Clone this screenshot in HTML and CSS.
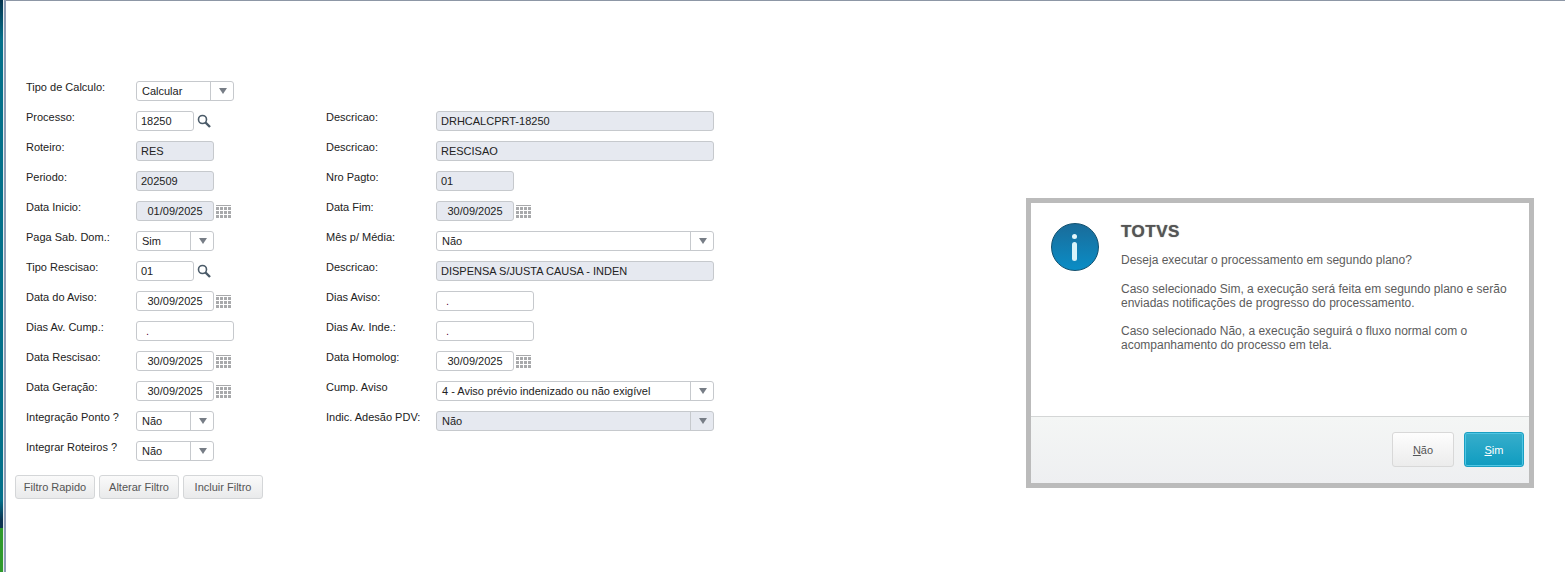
FILE: index.html
```html
<!DOCTYPE html>
<html lang="en">
<head>
  <meta charset="UTF-8">
  <title>TOTVS</title>
  <link rel="stylesheet" href="styles.css">
</head>
<body>
  <div class="frame">
    <div class="stripe"></div>
    <div class="content">
      <form class="form">
        <label>Tipo de Calculo:</label>
        <div class="cell"><div class="field select w98"><span>Calcular</span><i class="arrow"></i></div></div>
        <span></span><span></span>

        <label>Processo:</label>
        <div class="cell"><div class="field w58">18250</div><svg class="lookup" viewBox="0 0 14 14"><circle cx="5.5" cy="5.5" r="4" /><path d="M8.5 8.5L13 13" /></svg></div>
        <label>Descricao:</label>
        <div class="cell"><div class="field off w278">DRHCALCPRT-18250</div></div>

        <label>Roteiro:</label>
        <div class="cell"><div class="field off w78">RES</div></div>
        <label>Descricao:</label>
        <div class="cell"><div class="field off w278">RESCISAO</div></div>

        <label>Periodo:</label>
        <div class="cell"><div class="field off w78">202509</div></div>
        <label>Nro Pagto:</label>
        <div class="cell"><div class="field off w78">01</div></div>

        <label>Data Inicio:</label>
        <div class="cell"><div class="field off date w78">01/09/2025</div><i class="cal"></i></div>
        <label>Data Fim:</label>
        <div class="cell"><div class="field off date w78">30/09/2025</div><i class="cal"></i></div>

        <label>Paga Sab. Dom.:</label>
        <div class="cell"><div class="field select w78"><span>Sim</span><i class="arrow"></i></div></div>
        <label>Mês p/ Média:</label>
        <div class="cell"><div class="field select w278"><span>Não</span><i class="arrow"></i></div></div>

        <label>Tipo Rescisao:</label>
        <div class="cell"><div class="field w58">01</div><svg class="lookup" viewBox="0 0 14 14"><circle cx="5.5" cy="5.5" r="4" /><path d="M8.5 8.5L13 13" /></svg></div>
        <label>Descricao:</label>
        <div class="cell"><div class="field off w278">DISPENSA S/JUSTA CAUSA - INDEN</div></div>

        <label>Data do Aviso:</label>
        <div class="cell"><div class="field date w78">30/09/2025</div><i class="cal"></i></div>
        <label>Dias Aviso:</label>
        <div class="cell"><div class="field num w98">.</div></div>

        <label>Dias Av. Cump.:</label>
        <div class="cell"><div class="field num w98">.</div></div>
        <label>Dias Av. Inde.:</label>
        <div class="cell"><div class="field num w98">.</div></div>

        <label>Data Rescisao:</label>
        <div class="cell"><div class="field date w78">30/09/2025</div><i class="cal"></i></div>
        <label>Data Homolog:</label>
        <div class="cell"><div class="field date w78">30/09/2025</div><i class="cal"></i></div>

        <label>Data Geração:</label>
        <div class="cell"><div class="field date w78">30/09/2025</div><i class="cal"></i></div>
        <label>Cump. Aviso</label>
        <div class="cell"><div class="field select w278"><span>4 - Aviso prévio indenizado ou não exigível</span><i class="arrow"></i></div></div>

        <label>Integração Ponto ?</label>
        <div class="cell"><div class="field select w78"><span>Não</span><i class="arrow"></i></div></div>
        <label>Indic. Adesão PDV:</label>
        <div class="cell"><div class="field select off w278"><span>Não</span><i class="arrow"></i></div></div>

        <label>Integrar Roteiros ?</label>
        <div class="cell"><div class="field select w78"><span>Não</span><i class="arrow"></i></div></div>
        <span></span><span></span>
      </form>
      <div class="actions">
        <button type="button" class="btn">Filtro Rapido</button>
        <button type="button" class="btn">Alterar Filtro</button>
        <button type="button" class="btn">Incluir Filtro</button>
      </div>
    </div>
  </div>

  <div class="modal">
    <div class="modal-body">
      <div class="info-icon"><i class="info-dot"></i><i class="info-bar"></i></div>
      <div class="modal-text">
        <h3>TOTVS</h3>
        <p class="lead">Deseja executar o processamento em segundo plano?</p>
        <p>Caso selecionado Sim, a execução será feita em segundo plano e serão<br>enviadas notificações de progresso do processamento.</p>
        <p>Caso selecionado Não, a execução seguirá o fluxo normal com o<br>acompanhamento do processo em tela.</p>
      </div>
    </div>
    <div class="modal-foot">
      <button type="button" class="mbtn"><u>N</u>ão</button>
      <button type="button" class="mbtn primary"><u>S</u>im</button>
    </div>
  </div>
</body>
</html>
```

FILE: styles.css
```css
html, body {
  margin: 0;
  height: 100%;
}
body {
  font-family: "Liberation Sans", Arial, sans-serif;
  font-size: 11px;
  color: #222;
  background: #fff;
  overflow: hidden;
}
.frame {
  display: flex;
  height: 572px;
}
.stripe {
  width: 6px;
  flex: none;
  background:
    linear-gradient(to right, transparent 3px, #e8ecf0 3px, #e8ecf0 4px, #8c9cb4 4px),
    linear-gradient(to bottom, #07354f, #04708a 40px, #04708a 500px, #0c3450 520px, #0c3450 528px, #2f9a2c 528px);
}
.content {
  flex: 1;
  border-top: 1px solid #8d97a6;
  padding: 80px 0 0 9px;
}
.form {
  display: grid;
  grid-template-columns: 110px 190px 110px 278px;
  grid-auto-rows: 30px;
  padding-left: 11px;
}
.form label {
  line-height: 13px;
}
.cell {
  display: flex;
  align-items: flex-start;
}
.field {
  box-sizing: border-box;
  height: 20px;
  line-height: 19px;
  border: 1px solid #c6c9cd;
  border-radius: 3px;
  padding: 0 4px;
  background: #fff;
  white-space: nowrap;
}
.off {
  background: #e6e9f0;
}
.date {
  text-align: center;
}
.num {
  padding-left: 9px;
  color: #600040;
}
.select {
  display: flex;
  justify-content: space-between;
  padding: 0 0 0 5px;
}
.arrow {
  position: relative;
  width: 22px;
  flex: none;
  border-left: 1px solid #c6c9cd;
}
.arrow::after {
  content: "";
  position: absolute;
  left: 8px;
  top: 6px;
  border-style: solid;
  border-width: 6px 4px 0;
  border-color: #777d86 transparent transparent;
}
.w58 { width: 58px; }
.w78 { width: 78px; }
.w98 { width: 98px; }
.w278 { width: 278px; }
.lookup {
  width: 14px;
  height: 14px;
  margin: 3px 0 0 3px;
  fill: none;
  stroke: #4a5a68;
  stroke-width: 1.6;
}
.lookup path {
  stroke-width: 2.4;
}
.cal {
  width: 15px;
  height: 13px;
  margin: 4px 0 0 2px;
  background-color: #a8a9ab;
  background-image:
    linear-gradient(#a8a9ab, #a8a9ab),
    linear-gradient(to right, transparent 3px, #fff 3px),
    linear-gradient(to bottom, #fff 1px, transparent 1px);
  background-repeat: no-repeat, repeat, repeat;
  background-size: 100% 1px, 4px 4px, 4px 4px;
  background-position: 0 0, 0 1px, 0 1px;
}
.actions {
  display: flex;
  gap: 4px;
  margin-top: 4px;
}
.btn {
  box-sizing: border-box;
  height: 24px;
  width: 80px;
  padding: 0;
  border: 1px solid #d4d6d8;
  border-radius: 3px;
  background: linear-gradient(#fafafa, #e9eaeb);
  font: 11px "Liberation Sans", Arial, sans-serif;
  color: #555;
}
.modal {
  position: absolute;
  left: 1026px;
  top: 198px;
  box-sizing: border-box;
  width: 508px;
  height: 290px;
  border: 5px solid #bbb;
  display: flex;
  flex-direction: column;
  background: #fff;
}
.modal-body {
  flex: 1;
  display: flex;
}
.info-icon {
  position: relative;
  box-sizing: border-box;
  flex: none;
  width: 48px;
  height: 48px;
  margin: 20px 0 0 20px;
  border-radius: 50%;
  border: 1px solid #11506f;
  background: linear-gradient(#1a6c9a, #0a8dc6);
}
.info-dot {
  position: absolute;
  left: 20px;
  top: 10px;
  width: 5px;
  height: 5px;
  border-radius: 50%;
  background: #e4f6fb;
}
.info-bar {
  position: absolute;
  left: 20px;
  top: 18px;
  width: 5px;
  height: 19px;
  border-radius: 3px;
  background: #d8f3fa;
}
.modal-text {
  margin-left: 22px;
  padding-top: 19px;
  color: #5c5c5c;
  font-size: 12px;
  line-height: 14px;
}
.modal-text h3 {
  margin: 0 0 12px;
  font-size: 17px;
  line-height: 19px;
  letter-spacing: 0.5px;
  color: #555;
  text-shadow: 0 0 1px #777;
}
.modal-text p {
  margin: 0 0 14px;
}
.modal-text .lead {
  margin-bottom: 15px;
}
.modal-foot {
  height: 67px;
  flex: none;
  box-sizing: border-box;
  border-top: 1px solid #d4d6d6;
  background: linear-gradient(#f4f6f5, #eeeff1);
  display: flex;
  justify-content: flex-end;
  gap: 10px;
  padding: 15px 5px 0 0;
}
.mbtn {
  box-sizing: border-box;
  width: 62px;
  height: 35px;
  padding: 0;
  border: 1px solid #d8d8d8;
  border-radius: 3px;
  background: linear-gradient(#fdfdfd, #ececec);
  font: 11px "Liberation Sans", Arial, sans-serif;
  color: #555;
}
.primary {
  width: 60px;
  border: 1px solid #1a9fc2;
  box-shadow: inset 0 0 0 1px #4fc6e4;
  background: linear-gradient(#37aecb, #0f9cc0);
  color: #fff;
}
```
